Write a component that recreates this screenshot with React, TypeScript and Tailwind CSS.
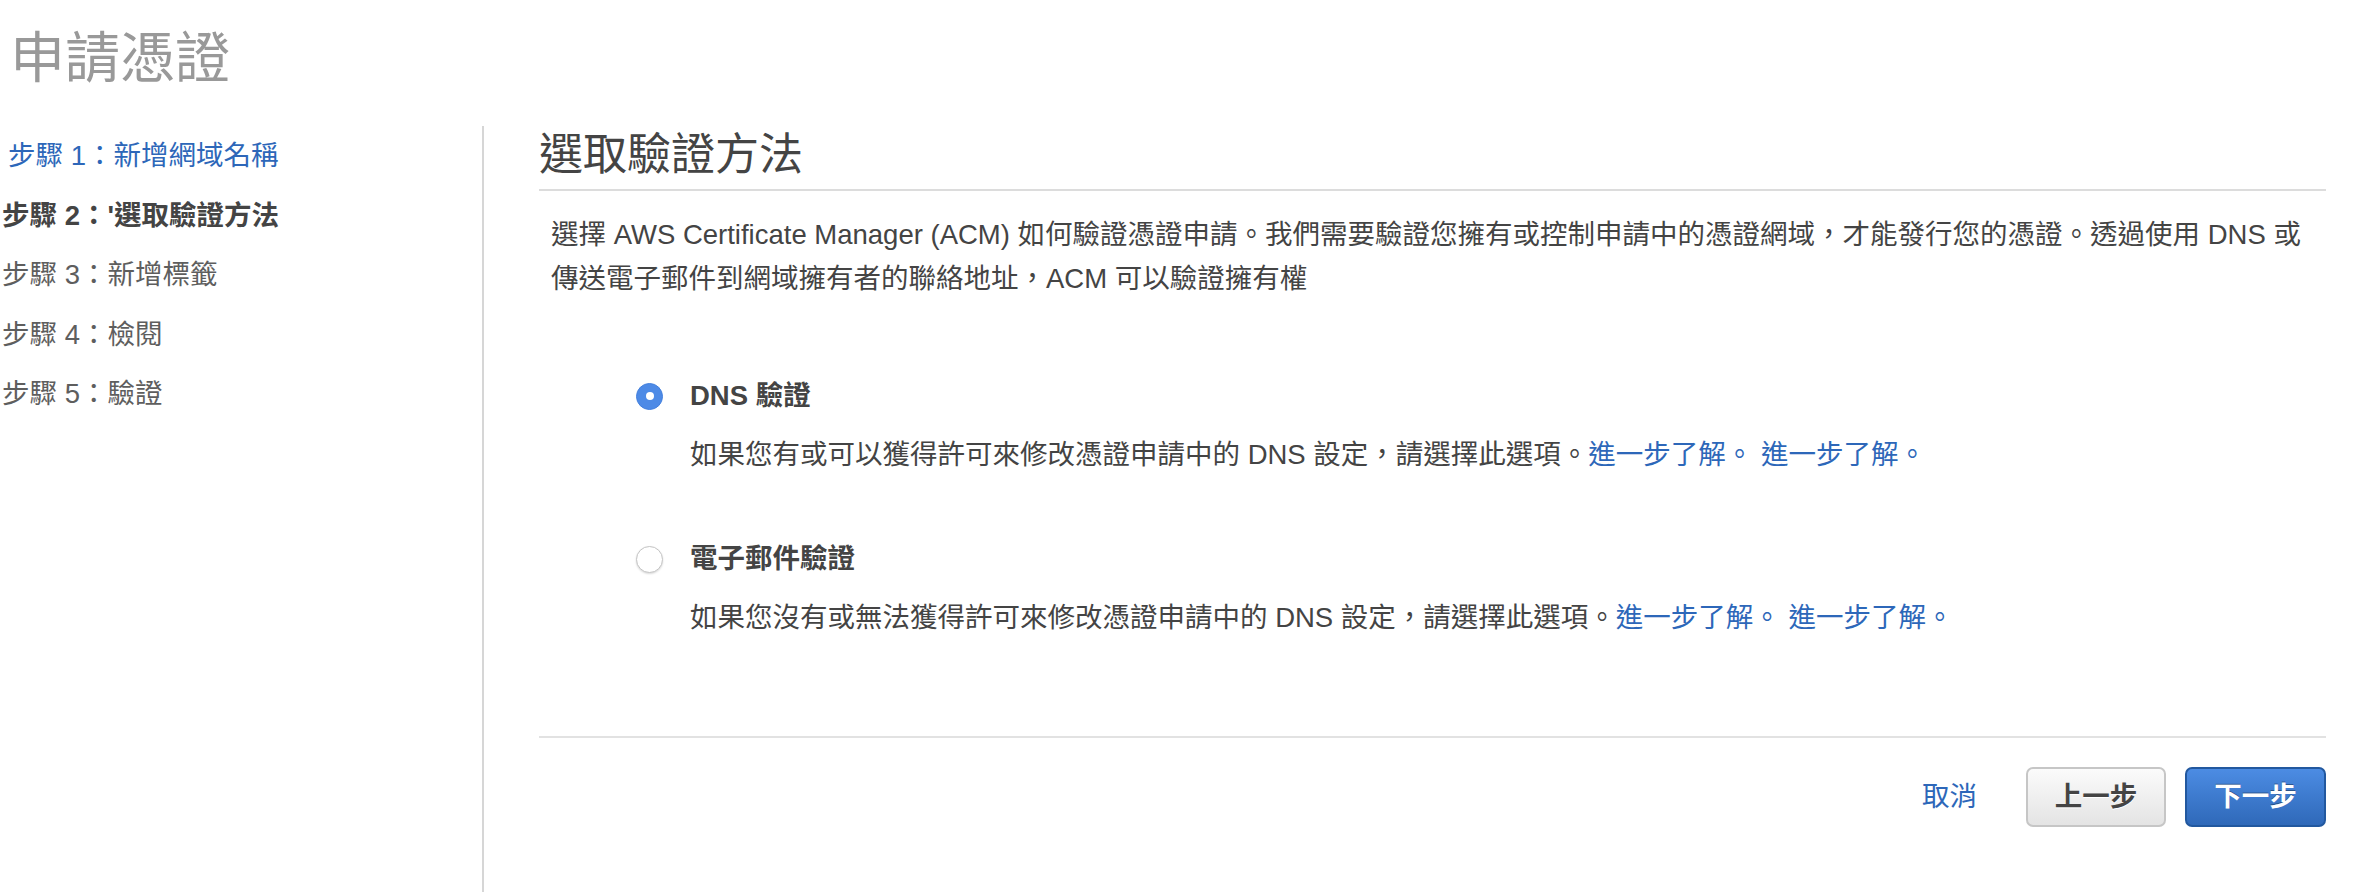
import React from "react";

const steps = [
  { label: "步驟 1：新增網域名稱", state: "done" },
  { label: "步驟 2：'選取驗證方法", state: "current" },
  { label: "步驟 3：新增標籤", state: "todo" },
  { label: "步驟 4：檢閱", state: "todo" },
  { label: "步驟 5：驗證", state: "todo" },
];

const Radio = ({ checked }: { checked: boolean }) =>
  checked ? (
    <span className="w-[27px] h-[27px] rounded-full bg-[#4d8ae6] border border-[#4380de] flex items-center justify-center shrink-0">
      <span className="w-[8px] h-[8px] rounded-full bg-white"></span>
    </span>
  ) : (
    <span className="w-[27px] h-[27px] rounded-full bg-white border border-[#c4c4c4] shadow-[0_1px_2px_rgba(0,0,0,0.15)] shrink-0"></span>
  );

const Option = ({
  checked,
  title,
  desc,
}: {
  checked: boolean;
  title: string;
  desc: string;
}) => (
  <div className="pl-[97px]">
    <div className="flex items-center leading-[44px]">
      <Radio checked={checked} />
      <span className="ml-[27px] font-bold text-[#444]">{title}</span>
    </div>
    <p className="mt-[15px] pl-[54px] leading-[44px] whitespace-nowrap text-[#444]">
      {desc}
      <a className="text-[#2d67b9]">進一步了解。</a>{" "}
      <a className="text-[#2d67b9]">進一步了解。</a>
    </p>
  </div>
);

export default function App() {
  return (
    <div className="w-[2362px] h-[892px] bg-white flex flex-col overflow-hidden font-['Liberation_Sans','Noto_Sans_CJK_TC',sans-serif] text-[27.5px]">
      <h1 className="text-[55px] leading-[66px] pl-[10px] pt-[25px] text-[#999]">申請憑證</h1>

      <div className="flex flex-1 mt-[35px]">
        <nav className="w-[484px] border-r-2 border-[#d6d6d6]">
          {steps.map((s, i) => (
            <div
              key={i}
              className={
                s.state === "done"
                  ? "leading-[59.5px] pl-[8px] text-[#2d67b9]"
                  : s.state === "current"
                  ? "leading-[59.5px] pl-[2px] font-bold text-[#444]"
                  : "leading-[59.5px] pl-[2px] text-[#5e5e5e]"
              }
            >
              {s.label}
            </div>
          ))}
        </nav>

        <main className="flex-1 pl-[55px] pr-[36px]">
          <h2 className="text-[44px] leading-[56px] pt-[1px] pb-[6px] border-b-2 border-[#dcdcdc] text-[#444]">
            選取驗證方法
          </h2>
          <p className="mt-[22px] px-[12px] leading-[44px] text-[#444] whitespace-nowrap">
            選擇 AWS Certificate Manager (ACM) 如何驗證憑證申請。我們需要驗證您擁有或控制申請中的憑證網域，才能發行您的憑證。透過使用 DNS 或
            <br />
            傳送電子郵件到網域擁有者的聯絡地址，ACM 可以驗證擁有權
          </p>

          <div className="mt-[73px]">
            <Option
              checked
              title="DNS 驗證"
              desc="如果您有或可以獲得許可來修改憑證申請中的 DNS 設定，請選擇此選項。"
            />
          </div>
          <div className="mt-[60px]">
            <Option
              checked={false}
              title="電子郵件驗證"
              desc="如果您沒有或無法獲得許可來修改憑證申請中的 DNS 設定，請選擇此選項。"
            />
          </div>

          <div className="mt-[96px] border-t-2 border-[#e2e2e2]"></div>

          <div className="mt-[29px] flex items-center justify-end">
            <a className="text-[#2d67b9] mr-[49px]">取消</a>
            <button className="w-[140px] h-[60px] rounded-[7px] border-2 border-[#c6c6c6] bg-gradient-to-b from-[#fbfbfb] to-[#e4e4e4] font-bold text-[#444] [text-shadow:0_1px_0_#fff]">
              上一步
            </button>
            <button className="ml-[19px] w-[141px] h-[60px] rounded-[7px] border-2 border-[#22589f] bg-gradient-to-b from-[#4c8ce3] to-[#2f69b9] font-bold text-white [text-shadow:0_-1px_0_rgba(0,0,0,0.35)]">
              下一步
            </button>
          </div>
        </main>
      </div>
    </div>
  );
}
